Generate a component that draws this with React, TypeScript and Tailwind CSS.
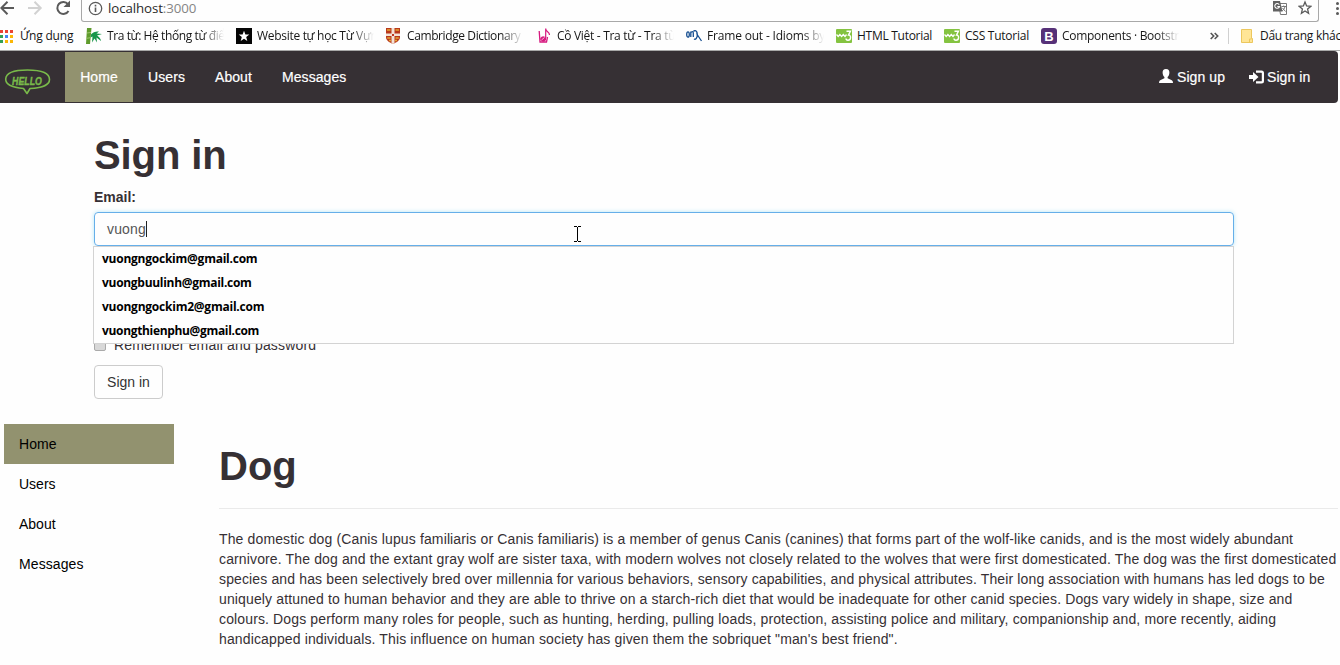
import type { ReactNode } from "react";

const chromeFont = "font-['Open_Sans','Noto_Sans',sans-serif]";

function AppsIcon() {
  const colors = ["#ea4335", "#ea4335", "#ea4335", "#34a053", "#4285f4", "#fbb605", "#34a053", "#fbb605", "#fbb605"];
  return (
    <svg width="13" height="13" shapeRendering="crispEdges">
      {colors.map((c, i) => (
        <rect key={i} x={(i % 3) * 5} y={Math.floor(i / 3) * 5} width="3" height="3" fill={c} />
      ))}
    </svg>
  );
}

function BambooIcon() {
  return (
    <svg width="16" height="16" viewBox="0 0 16 16">
      <path d="M1 0h4.500L4 16H0z" fill="#5f9b2c" />
      <path d="M0 10.400l5-.8M1 5l4-.6" stroke="#9cc66b" />
      <path d="M5 6.500C7 4.500 8 3.500 13 3.500L10.500 5.500 16 6l-5 1.500c2.500 1.500 3.500 3 4 5.500L10.500 9.500 11 14.500 8.500 10.500 6 14.500l.5-6-2 1z" fill="#17954a" />
    </svg>
  );
}

function StarTileIcon() {
  return (
    <svg width="16" height="16" viewBox="0 0 16 16">
      <path d="M0 0h16v16H0z" fill="#050505" />
      <path d="M8 2.800l1.400 3.700 3.900.1-3.100 2.500 1.100 3.900L8 10.800 4.700 13l1.100-3.900L2.700 6.600l3.900-.1z" fill="#fff" />
    </svg>
  );
}

function ShieldIcon() {
  return (
    <svg width="15" height="16" viewBox="0 0 15 16">
      <path d="M0 0h14v9c0 4-4 5.500-7 7-3-1.500-7-3-7-7z" fill="#b9381c" />
      <path d="M5.500 0h3v15.300L7 16l-1.500-.7z" fill="#f3e3d6" />
      <path d="M0 5.500h14v2.500H0z" fill="#f3e3d6" />
      <path d="M6 6h2v2H6z" fill="#c0331b" />
      <path d="M1 2h3.500M9.500 2H13M1.200 10h3.300M9.500 10h3.300M3 12.500h2M9 12.500h2" stroke="#e5a732" strokeWidth="1.600" />
    </svg>
  );
}

function NoteIcon() {
  return (
    <svg width="13" height="16" viewBox="0 0 13 16" fill="none" stroke="#d6197f">
      <path d="M1.200 3l.8 11h6.500l1-5" strokeWidth="1.300" />
      <path d="M7.700 10V.5c0 3.500 3.800 3 3.800 6.500" strokeWidth="1.200" />
      <ellipse cx="5.200" cy="11" rx="2.500" ry="2.200" fill="#d6197f" />
      <path d="M3.500 12l3-2.500" stroke="#f6b5d8" />
    </svg>
  );
}

function FrameIcon() {
  return (
    <svg width="17" height="12" viewBox="0 0 17 12" fill="none" stroke="#174f91" strokeWidth="1.300">
      <ellipse cx="2" cy="4.500" rx="1.300" ry="2.700" />
      <path d="M4.800 1.500V7M4.800 3c.8-2 2.500-1.500 2.500 0v4" />
      <path d="M7.500 1.500C9-.5 11.500 1 11.300 5c0 3-1.800 5-3.300 4M10.500 3.500L15.500 11" />
    </svg>
  );
}

function W3Icon() {
  return (
    <svg width="16" height="14" viewBox="0 0 16 14">
      <rect width="16" height="14" rx="1" fill="#84c340" />
      <path d="M.5 5.500l1.700 2 1.700-2 1.700 2 1.700-2 1.700 2L10.500 5.500" fill="none" stroke="#fff" strokeWidth="1.300" />
      <path d="M10.500 2.200h4L12.500 6c3 0 2.700 5.200-.5 5.200-1.300 0-2-.7-2-1.700" fill="none" stroke="#fff" strokeWidth="1.400" />
    </svg>
  );
}

function BootstrapIcon() {
  return (
    <span className="flex size-4 items-center justify-center rounded-[3px] bg-[#563178] font-['Liberation_Sans',sans-serif] text-[13px] leading-none font-bold text-white">
      B
    </span>
  );
}

function FolderIcon() {
  return (
    <svg width="12" height="14" viewBox="0 0 12 14">
      <path d="M.5.5h10v9h1v4H.5z" fill="#ffe596" stroke="#ecc75d" />
      <path d="M8.500 13.500v-3.500h2" fill="none" stroke="#ecc75d" />
    </svg>
  );
}

type BookmarkProps = {
  icon: ReactNode;
  label: string;
  box: string;
  iconBox: string;
  text: string;
  fade?: boolean;
};

function Bookmark({ icon, label, box, iconBox, text, fade }: BookmarkProps) {
  return (
    <div className={`flex h-full shrink-0 items-center ${box}`}>
      <span className={`flex shrink-0 items-center ${iconBox}`}>{icon}</span>
      <span
        className={`min-w-0 whitespace-nowrap ${text} ${
          fade ? "flex-1 overflow-hidden [mask-image:linear-gradient(to_right,#000_calc(100%-22px),transparent)]" : ""
        }`}
      >
        {label}
      </span>
    </div>
  );
}

function Toolbar() {
  return (
    <div className="flex h-[22px] items-start">
      <svg width="81" height="18" viewBox="0 0 81 18" fill="none" strokeWidth="2" className="shrink-0">
        <path d="M14 8H1.500M7.500 1.800L1.300 8l6.200 6.200" stroke="#5a5a5a" />
        <path d="M28 8h12.500M34.500 1.800L40.700 8l-6.200 6.200" stroke="#d2d2d2" />
        <path d="M68 4.200A6 6 0 1 0 68.500 11" stroke="#5a5a5a" />
        <path d="M70 .5v6.500h-6.500z" fill="#5a5a5a" />
      </svg>
      <div className="flex h-[22px] w-[1238px] shrink-0 items-start rounded-b-[3px] border border-t-0 border-[#a8a8a8] pl-1.5">
        <svg width="15" height="15" viewBox="0 0 15 15" className="mt-px shrink-0">
          <circle cx="7.500" cy="7.500" r="6.200" fill="none" stroke="#5a5a5a" strokeWidth="1.300" />
          <path d="M6.700 6.500h1.600V11H6.700zM6.700 3.800h1.600v1.600H6.700z" fill="#5a5a5a" />
        </svg>
        <span className={`ml-[5px] text-[13.3px] leading-4 tracking-[-0.1px] text-[#2a2a2a] ${chromeFont}`}>
          localhost<span className="text-[#858585]">:3000</span>
        </span>
        <span className="flex-1" />
        <svg width="14" height="15" viewBox="0 0 14 15" className="mr-[11px] shrink-0">
          <path d="M5.500 3.500h8v11h-6z" fill="#fff" stroke="#777" />
          <path d="M0 1h7l2.500 10.500H0z" fill="#626262" />
          <path d="M6.200 4.600A2.400 2.400 0 1 0 6.500 6.500H4.300" fill="none" stroke="#fff" strokeWidth="1.100" />
          <path d="M8.500 6.500H13M10.700 5.500v1M12 6.500c-.5 2-1.500 3.500-3 4.500M9.500 8l3 3.500" stroke="#777" fill="none" />
        </svg>
        <svg width="14" height="15" viewBox="0 0 14 15" className="mr-[6px] shrink-0">
          <path d="M7 2l1.600 4 4.300.3-3.300 2.800 1 4.200L7 11l-3.600 2.300 1-4.200L1.100 6.300 5.400 6z" fill="none" stroke="#5a5a5a" strokeWidth="1.300" />
        </svg>
      </div>
      <svg width="21" height="17" viewBox="0 0 21 17" fill="#5a5a5a" className="shrink-0">
        <circle cx="18.500" cy="3.500" r="1.500" />
        <circle cx="18.500" cy="8.500" r="1.500" />
        <circle cx="18.500" cy="13.500" r="1.500" />
      </svg>
    </div>
  );
}

function BookmarksBar() {
  return (
    <div className={`flex h-[29px] items-center overflow-hidden border-b border-[#a9a9a9] text-[12px] leading-[18px] text-[#161616] ${chromeFont}`}>
      <Bookmark icon={<AppsIcon />} label="Ứng dụng" box="w-[86px]" iconBox="w-5" text="tracking-[-0.2px]" />
      <Bookmark icon={<BambooIcon />} label="Tra từ: Hệ thống từ điển" box="w-[138px] mr-3" iconBox="w-[21px]" text="tracking-[-0.4px]" fade />
      <Bookmark icon={<StarTileIcon />} label="Website tự học Từ Vựng" box="w-[138px] mr-3" iconBox="w-[21px]" text="tracking-[-0.3px]" fade />
      <Bookmark icon={<ShieldIcon />} label="Cambridge Dictionary" box="w-[137px] mr-[15px]" iconBox="w-[21px]" text="tracking-[-0.4px]" fade />
      <Bookmark icon={<NoteIcon />} label="Cồ Việt - Tra từ - Tra từ" box="w-[136px] mr-3" iconBox="w-[19px]" text="tracking-[-0.3px]" fade />
      <Bookmark icon={<FrameIcon />} label="Frame out - Idioms by The" box="w-[138px] mr-3" iconBox="w-[21px]" text="tracking-[-0.18px]" fade />
      <Bookmark icon={<W3Icon />} label="HTML Tutorial" box="w-[108px]" iconBox="w-[21px]" text="tracking-[-0.28px]" />
      <Bookmark icon={<W3Icon />} label="CSS Tutorial" box="w-[97px]" iconBox="w-[21px]" text="tracking-[-0.25px]" />
      <Bookmark icon={<BootstrapIcon />} label="Components · Bootstrap" box="w-[138px]" iconBox="w-[21px]" text="tracking-[-0.28px]" fade />
      <svg width="9" height="8" viewBox="0 0 9 8" fill="none" stroke="#555" strokeWidth="1.600" className="ml-[31px] shrink-0">
        <path d="M.7 1l3 3-3 3M4.700 1l3 3-3 3" />
      </svg>
      <span className="ml-[9px] mr-3 h-4 w-px shrink-0 bg-[#d0d0d0]" />
      <Bookmark icon={<FolderIcon />} label="Dấu trang khác" box="w-[99px]" iconBox="w-[19px]" text="tracking-[-0.28px]" />
    </div>
  );
}

function HelloLogo() {
  return (
    <svg width="65" height="52" viewBox="0 0 65 52" fill="none" stroke="#79b94a" className="shrink-0">
      <path d="M23.500 37.500C12 36.500 5.500 33.500 5.700 28 6 21.500 15 19 27.500 19S49.500 21.500 49.500 28.500C49.500 34 41 37 30 37.500L27 42.500z" strokeWidth="1.600" strokeLinejoin="round" />
      <text x="12" y="34" textLength="30" lengthAdjust="spacingAndGlyphs" fill="#79b94a" strokeWidth="0.400" className="font-['Liberation_Sans',sans-serif] text-[11px] font-bold italic">
        HELLO
      </text>
    </svg>
  );
}

function Navbar() {
  return (
    <nav className="flex h-[52px] w-[1338px] rounded-r-[4px] bg-[#363034] text-[14px] leading-5 tracking-[0.08px] text-white [-webkit-text-stroke:0.2px_white]">
      <HelloLogo />
      <a className="mt-px flex h-[50px] w-[68px] items-center justify-center bg-[#92926f]">Home</a>
      <a className="flex items-center px-[15px]">Users</a>
      <a className="flex items-center px-[15px]">About</a>
      <a className="flex items-center px-[15px]">Messages</a>
      <div className="ml-auto flex">
        <a className="flex w-[90px] items-center">
          <svg width="14" height="14" viewBox="0 0 14 14" fill="#fff" className="mr-1 mb-0.5">
            <path d="M7 0C4.500 0 3.500 1.500 3.600 3.800c.1 1.900.7 3.400 1.800 4.300v1.200C3.500 10.300.5 11 .2 12.600L0 14h14l-.2-1.400c-.3-1.600-3.300-2.300-5.200-3.300V8.100c1.100-.9 1.700-2.400 1.800-4.300C10.500 1.500 9.500 0 7 0z" />
          </svg>
          Sign up
        </a>
        <a className="flex w-[89px] items-center">
          <svg width="16" height="14" viewBox="0 0 16 14" fill="#fff" className="mr-0.5 mb-px">
            <path d="M0 5h4V2L9.500 7 4 12V9H0z" />
            <path d="M7 .5h5.500A2.500 2.500 0 0 1 15 3v8a2.500 2.500 0 0 1-2.500 2.500H7v-2.200h5.300a.5.500 0 0 0 .5-.5V3.200a.5.500 0 0 0-.5-.5H7z" />
          </svg>
          Sign in
        </a>
      </div>
    </nav>
  );
}

const suggestions = [
  { email: "vuongngockim@gmail.com", tracking: "tracking-[-0.24px]" },
  { email: "vuongbuulinh@gmail.com", tracking: "tracking-[-0.29px]" },
  { email: "vuongngockim2@gmail.com", tracking: "tracking-[-0.23px]" },
  { email: "vuongthienphu@gmail.com", tracking: "tracking-[-0.33px]" },
];

function SignInForm() {
  return (
    <section className="ml-[94px] w-[1140px] pt-[30px]">
      <h1 className="text-[40px] leading-[44px] font-bold tracking-[-0.1px] text-[#363034]">Sign in</h1>
      <div className="mt-[10px] text-[14px] leading-5 font-bold text-[#363034]">Email:</div>
      <div className="relative mt-[5px] flex h-[34px] items-center rounded-[4px] border border-[#66afe9] pl-3 text-[14px] leading-5 tracking-[0.15px] text-[#555] shadow-[0_0_4px_rgba(130,215,245,0.6)]">
        vuong
        <span className="h-4 w-px bg-[#222]" />
        <svg width="7" height="16" viewBox="0 0 7 16" fill="none" stroke="#000" shapeRendering="crispEdges" className="absolute top-[13px] left-[479px]">
          <path d="M0 .5h3M4 .5h3M3.500 1v14M0 15.500h3M4 15.500h3" />
        </svg>
        <ul className="absolute top-[33px] -left-[2px] z-10 h-[98px] w-[1141px] border border-[#d3d3d3] bg-[#fefefe] text-[12px] leading-6 font-bold text-black font-['Open_Sans','Noto_Sans',sans-serif]">
          {suggestions.map((s) => (
            <li key={s.email} className={`h-6 pl-2 ${s.tracking}`}>{s.email}</li>
          ))}
        </ul>
      </div>
      <div className="mt-[89px] flex h-5 items-center text-[14px] leading-5 tracking-[0.17px] text-[#363034]">
        <span className="mr-2 size-3 rounded-[2px] border border-[#aaa] bg-[#d8d8d8]" />
        Remember email and password
      </div>
      <button className="mt-[10px] block h-[34px] w-[69px] rounded-[4px] border border-[#ccc] bg-[#fefefe] text-[14px] leading-5 text-[#333]">Sign in</button>
    </section>
  );
}

const paragraph = [
  "The domestic dog (Canis lupus familiaris or Canis familiaris) is a member of genus Canis (canines) that forms part of the wolf-like canids, and is the most widely abundant",
  "carnivore. The dog and the extant gray wolf are sister taxa, with modern wolves not closely related to the wolves that were first domesticated. The dog was the first domesticated",
  "species and has been selectively bred over millennia for various behaviors, sensory capabilities, and physical attributes. Their long association with humans has led dogs to be",
  "uniquely attuned to human behavior and they are able to thrive on a starch-rich diet that would be inadequate for other canid species. Dogs vary widely in shape, size and",
  "colours. Dogs perform many roles for people, such as hunting, herding, pulling loads, protection, assisting police and military, companionship and, more recently, aiding",
  "handicapped individuals. This influence on human society has given them the sobriquet \"man's best friend\".",
];

export default function App() {
  return (
    <div className="h-[665px] w-[1340px] overflow-hidden bg-[#fefefe] font-['Liberation_Sans',Arial,sans-serif]">
      <Toolbar />
      <BookmarksBar />
      <Navbar />
      <SignInForm />
      <div className="mt-[25px] flex">
        <aside className="ml-1 w-[170px] shrink-0 text-[14px] leading-10 text-black">
          <div className="bg-[#92926f] pl-[15px] tracking-[0.1px]">Home</div>
          <div className="pl-[15px]">Users</div>
          <div className="pl-[15px]">About</div>
          <div className="pl-[15px] tracking-[0.1px]">Messages</div>
        </aside>
        <main className="ml-[45px] w-[1119px] shrink-0 pt-5">
          <h1 className="text-[40px] leading-[44px] font-bold text-[#363034]">Dog</h1>
          <hr className="mt-5 border-[#eaeaea]" />
          <p className="mt-5 text-[14px] leading-5 tracking-[0.134px] whitespace-nowrap text-[#363034]">
            {paragraph.map((line) => (
              <span key={line} className="block">{line}</span>
            ))}
          </p>
        </main>
      </div>
    </div>
  );
}
